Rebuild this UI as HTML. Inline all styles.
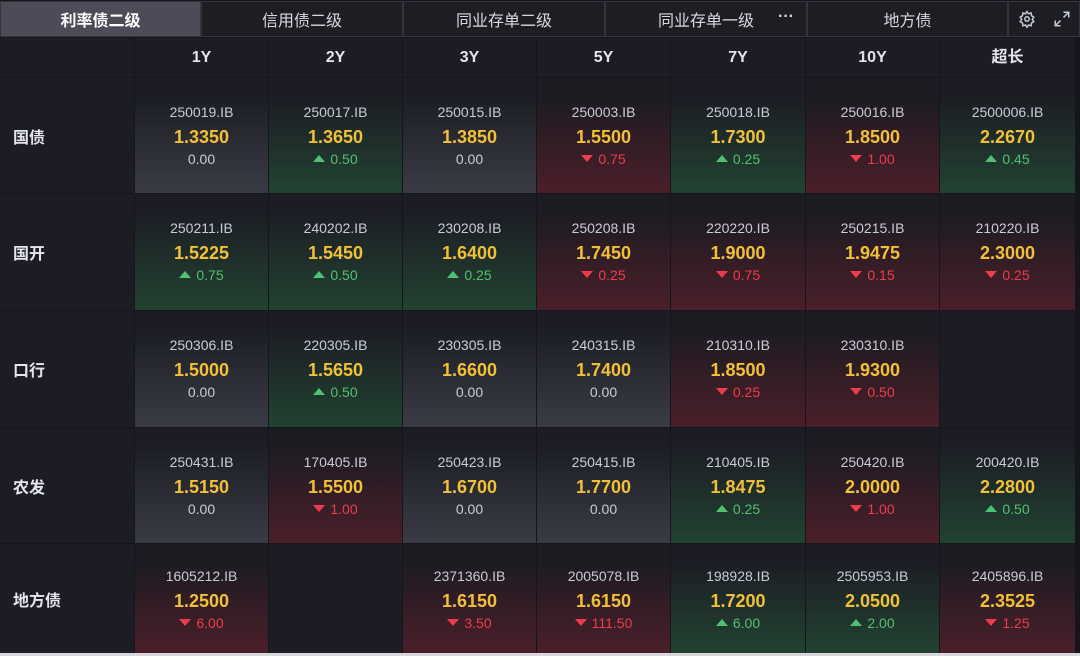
<!DOCTYPE html><html><head><meta charset="utf-8"><style>
*{margin:0;padding:0;box-sizing:border-box}
body{width:1080px;height:656px;background:#15161b;font-family:"Liberation Sans","Noto Sans CJK SC",sans-serif;position:relative;overflow:hidden}
.tab{position:absolute;top:1px;height:36px;background:#1d1e24;border:1px solid #33343c;color:#d8d9e0;font-size:16px;display:flex;align-items:center;justify-content:center}
.tab.a{background:#4b4c58;color:#fff;font-weight:bold}
.c{position:absolute;width:133px;text-align:center;color:#c9cbd8}
.h{background:#1c1d24;font-weight:bold;font-size:16px;color:#e4e5ec;display:flex;align-items:center;justify-content:center;line-height:18px}
.l{background:#1c1d24;font-weight:bold;font-size:16px;color:#e4e5ec;display:flex;align-items:center;padding-left:13px;justify-content:flex-start}
.n{background:linear-gradient(#1c1d24 15%,#3a3b45)}
.g{background:linear-gradient(#1c1d24 15%,#224231)}
.r{background:linear-gradient(#1c1b22 15%,#4a1f29)}
.e{background:#1c1d24}
.code{font-size:14px;margin-top:25px;line-height:18px}
.rate{font-size:18px;font-weight:bold;color:#f2c035;line-height:22px;margin-top:5px}
.ch{font-size:14px;line-height:18px;margin-top:2px}
.up{color:#4fc272}.dn{color:#ee3c4c}
.up:before{content:"";display:inline-block;border:6px solid transparent;border-bottom:7px solid #4fc272;border-top:0;margin-right:5px;vertical-align:2px}
.dn:before{content:"";display:inline-block;border:6px solid transparent;border-top:7px solid #ee3c4c;border-bottom:0;margin-right:5px;vertical-align:2px}
</style></head><body>
<div class="tab a" style="left:0;width:201px">利率债二级</div>
<div class="tab" style="left:201px;width:202px">信用债二级</div>
<div class="tab" style="left:403px;width:202px">同业存单二级</div>
<div class="tab" style="left:605px;width:202px">同业存单一级<span style="position:absolute;right:12px;top:6px;font-weight:bold">···</span></div>
<div class="tab" style="left:807px;width:201px">地方债</div>
<div class="tab" style="left:1008px;width:72px;justify-content:space-around">
<svg width="18" height="18" viewBox="0 0 24 24" fill="none" stroke="#c8c9d2" stroke-width="2"><circle cx="12" cy="12" r="3"/><path d="M12 2l2 3 3.5-1 .5 3.5 3 2-2 3 2 3-3 2-.5 3.5-3.5-1-2 3-2-3-3.5 1-.5-3.5-3-2 2-3-2-3 3-2 .5-3.5 3.5 1z"/></svg>
<svg width="18" height="18" viewBox="0 0 24 24" fill="none" stroke="#c8c9d2" stroke-width="2"><path d="M14 3h7v7M21 3l-7 7M10 21H3v-7M3 21l7-7"/></svg></div>

<div class="c l" style="left:0;top:38px;height:39px;width:134px"></div>
<div class="c h" style="left:135px;top:38px;height:39px">1Y</div>
<div class="c h" style="left:269px;top:38px;height:39px">2Y</div>
<div class="c h" style="left:403px;top:38px;height:39px">3Y</div>
<div class="c h" style="left:537px;top:38px;height:39px">5Y</div>
<div class="c h" style="left:671px;top:38px;height:39px;width:134px">7Y</div>
<div class="c h" style="left:806px;top:38px;height:39px">10Y</div>
<div class="c h" style="left:940px;top:38px;height:39px;width:135px">超长</div>

<div class="c l" style="left:0;top:78px;height:115px;width:134px">国债</div>
<div class="c n" style="left:135px;top:78px;height:115px"><div class="code">250019.IB</div><div class="rate">1.3350</div><div class="ch">0.00</div></div>
<div class="c g" style="left:269px;top:78px;height:115px"><div class="code">250017.IB</div><div class="rate">1.3650</div><div class="ch up">0.50</div></div>
<div class="c n" style="left:403px;top:78px;height:115px"><div class="code">250015.IB</div><div class="rate">1.3850</div><div class="ch">0.00</div></div>
<div class="c r" style="left:537px;top:78px;height:115px"><div class="code">250003.IB</div><div class="rate">1.5500</div><div class="ch dn">0.75</div></div>
<div class="c g" style="left:671px;top:78px;height:115px;width:134px"><div class="code">250018.IB</div><div class="rate">1.7300</div><div class="ch up">0.25</div></div>
<div class="c r" style="left:806px;top:78px;height:115px"><div class="code">250016.IB</div><div class="rate">1.8500</div><div class="ch dn">1.00</div></div>
<div class="c g" style="left:940px;top:78px;height:115px;width:135px"><div class="code">2500006.IB</div><div class="rate">2.2670</div><div class="ch up">0.45</div></div>

<div class="c l" style="left:0;top:194px;height:116px;width:134px">国开</div>
<div class="c g" style="left:135px;top:194px;height:116px"><div class="code">250211.IB</div><div class="rate">1.5225</div><div class="ch up">0.75</div></div>
<div class="c g" style="left:269px;top:194px;height:116px"><div class="code">240202.IB</div><div class="rate">1.5450</div><div class="ch up">0.50</div></div>
<div class="c g" style="left:403px;top:194px;height:116px"><div class="code">230208.IB</div><div class="rate">1.6400</div><div class="ch up">0.25</div></div>
<div class="c r" style="left:537px;top:194px;height:116px"><div class="code">250208.IB</div><div class="rate">1.7450</div><div class="ch dn">0.25</div></div>
<div class="c r" style="left:671px;top:194px;height:116px;width:134px"><div class="code">220220.IB</div><div class="rate">1.9000</div><div class="ch dn">0.75</div></div>
<div class="c r" style="left:806px;top:194px;height:116px"><div class="code">250215.IB</div><div class="rate">1.9475</div><div class="ch dn">0.15</div></div>
<div class="c r" style="left:940px;top:194px;height:116px;width:135px"><div class="code">210220.IB</div><div class="rate">2.3000</div><div class="ch dn">0.25</div></div>

<div class="c l" style="left:0;top:311px;height:116px;width:134px">口行</div>
<div class="c n" style="left:135px;top:311px;height:116px"><div class="code">250306.IB</div><div class="rate">1.5000</div><div class="ch">0.00</div></div>
<div class="c g" style="left:269px;top:311px;height:116px"><div class="code">220305.IB</div><div class="rate">1.5650</div><div class="ch up">0.50</div></div>
<div class="c n" style="left:403px;top:311px;height:116px"><div class="code">230305.IB</div><div class="rate">1.6600</div><div class="ch">0.00</div></div>
<div class="c n" style="left:537px;top:311px;height:116px"><div class="code">240315.IB</div><div class="rate">1.7400</div><div class="ch">0.00</div></div>
<div class="c r" style="left:671px;top:311px;height:116px;width:134px"><div class="code">210310.IB</div><div class="rate">1.8500</div><div class="ch dn">0.25</div></div>
<div class="c r" style="left:806px;top:311px;height:116px"><div class="code">230310.IB</div><div class="rate">1.9300</div><div class="ch dn">0.50</div></div>
<div class="c e" style="left:940px;top:311px;height:116px;width:135px"></div>

<div class="c l" style="left:0;top:428px;height:115px;width:134px">农发</div>
<div class="c n" style="left:135px;top:428px;height:115px"><div class="code">250431.IB</div><div class="rate">1.5150</div><div class="ch">0.00</div></div>
<div class="c r" style="left:269px;top:428px;height:115px"><div class="code">170405.IB</div><div class="rate">1.5500</div><div class="ch dn">1.00</div></div>
<div class="c n" style="left:403px;top:428px;height:115px"><div class="code">250423.IB</div><div class="rate">1.6700</div><div class="ch">0.00</div></div>
<div class="c n" style="left:537px;top:428px;height:115px"><div class="code">250415.IB</div><div class="rate">1.7700</div><div class="ch">0.00</div></div>
<div class="c g" style="left:671px;top:428px;height:115px;width:134px"><div class="code">210405.IB</div><div class="rate">1.8475</div><div class="ch up">0.25</div></div>
<div class="c r" style="left:806px;top:428px;height:115px"><div class="code">250420.IB</div><div class="rate">2.0000</div><div class="ch dn">1.00</div></div>
<div class="c g" style="left:940px;top:428px;height:115px;width:135px"><div class="code">200420.IB</div><div class="rate">2.2800</div><div class="ch up">0.50</div></div>

<div class="c l" style="left:0;top:544px;height:109px;width:134px">地方债</div>
<div class="c r" style="left:135px;top:544px;height:109px"><div class="code" style="margin-top:23px">1605212.IB</div><div class="rate">1.2500</div><div class="ch dn">6.00</div></div>
<div class="c e" style="left:269px;top:544px;height:109px"></div>
<div class="c r" style="left:403px;top:544px;height:109px"><div class="code" style="margin-top:23px">2371360.IB</div><div class="rate">1.6150</div><div class="ch dn">3.50</div></div>
<div class="c r" style="left:537px;top:544px;height:109px"><div class="code" style="margin-top:23px">2005078.IB</div><div class="rate">1.6150</div><div class="ch dn">111.50</div></div>
<div class="c g" style="left:671px;top:544px;height:109px;width:134px"><div class="code" style="margin-top:23px">198928.IB</div><div class="rate">1.7200</div><div class="ch up">6.00</div></div>
<div class="c g" style="left:806px;top:544px;height:109px"><div class="code" style="margin-top:23px">2505953.IB</div><div class="rate">2.0500</div><div class="ch up">2.00</div></div>
<div class="c r" style="left:940px;top:544px;height:109px;width:135px"><div class="code" style="margin-top:23px">2405896.IB</div><div class="rate">2.3525</div><div class="ch dn">1.25</div></div>
<div style="position:absolute;left:0;top:653px;width:1080px;height:3px;background:#d8d8dc"></div>
</body></html>
